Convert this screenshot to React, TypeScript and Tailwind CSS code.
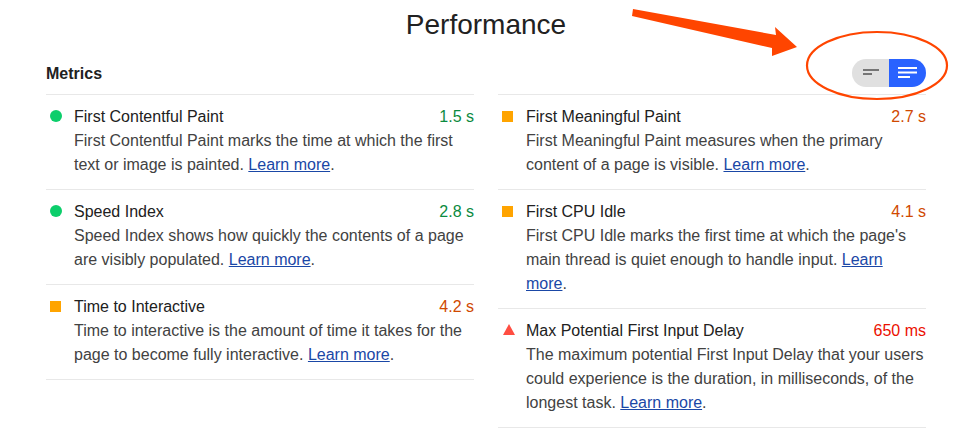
import React from "react";

type Kind = "pass" | "average" | "fail";

interface Metric {
  title: string;
  value: string;
  kind: Kind;
  desc: string;
}

const left: Metric[] = [
  {
    title: "First Contentful Paint",
    value: "1.5 s",
    kind: "pass",
    desc: "First Contentful Paint marks the time at which the first text or image is painted.",
  },
  {
    title: "Speed Index",
    value: "2.8 s",
    kind: "pass",
    desc: "Speed Index shows how quickly the contents of a page are visibly populated.",
  },
  {
    title: "Time to Interactive",
    value: "4.2 s",
    kind: "average",
    desc: "Time to interactive is the amount of time it takes for the page to become fully interactive.",
  },
];

const right: Metric[] = [
  {
    title: "First Meaningful Paint",
    value: "2.7 s",
    kind: "average",
    desc: "First Meaningful Paint measures when the primary content of a page is visible.",
  },
  {
    title: "First CPU Idle",
    value: "4.1 s",
    kind: "average",
    desc: "First CPU Idle marks the first time at which the page's main thread is quiet enough to handle input.",
  },
  {
    title: "Max Potential First Input Delay",
    value: "650 ms",
    kind: "fail",
    desc: "The maximum potential First Input Delay that your users could experience is the duration, in milliseconds, of the longest task.",
  },
];

function Icon({ kind }: { kind: Kind }) {
  if (kind === "pass") {
    return <span className="mt-[5px] ml-[4px] block h-[12px] w-[12px] rounded-full bg-[#0cce6b]" />;
  }
  if (kind === "average") {
    return <span className="mt-[6px] ml-[4px] block h-[11px] w-[11px] bg-[#ffa400]" />;
  }
  return (
    <svg className="mt-[5px] ml-[5px] block" width="12" height="11" viewBox="0 0 12 11">
      <polygon points="6,0 12,11 0,11" fill="#ff4e42" />
    </svg>
  );
}

const valueColor: Record<Kind, string> = {
  pass: "text-[#0b8a40]",
  average: "text-[#d04900]",
  fail: "text-[#eb0f00]",
};

function Row({ m }: { m: Metric }) {
  return (
    <div className="flex border-b border-[#e8e8e8] pt-[10px] pb-[12px]">
      <div className="w-[28px] shrink-0">
        <Icon kind={m.kind} />
      </div>
      <div className="flex-1">
        <div className="flex justify-between">
          <span className="text-[#212121]">{m.title}</span>
          <span className={valueColor[m.kind]}>{m.value}</span>
        </div>
        <div className="w-[398px] text-[#424242]">
          {m.desc}{" "}
          <a href="#" className="text-[#1a47a6] underline">
            Learn more
          </a>
          .
        </div>
      </div>
    </div>
  );
}

function Column({ items }: { items: Metric[] }) {
  return (
    <div className="border-t border-[#e8e8e8]">
      {items.map((m) => (
        <Row key={m.title} m={m} />
      ))}
    </div>
  );
}

export default function App() {
  return (
    <div
      className="relative h-[435px] w-[962px] overflow-hidden bg-white pt-[1px] text-[16px] leading-[24px]"
      style={{ fontFamily: '"Liberation Sans", Arial, sans-serif' }}
    >
      <div className="ml-[46px] w-[880px]">
        <div className="h-[48px] text-center text-[28px] leading-[48px] text-[#212121]">Performance</div>
        <div className="flex h-[45px] items-center justify-between pt-[3px]">
          <span className="pt-[2px] font-bold text-[#212121]">Metrics</span>
          <div className="flex h-[28px] w-[74px] overflow-hidden rounded-full">
            <div className="flex w-[37px] items-center justify-center bg-[#e0e0e0]">
              <svg width="18" height="10" viewBox="0 0 18 10">
                <rect x="1" y="1" width="16" height="2" fill="#757575" />
                <rect x="1" y="5" width="9" height="2" fill="#757575" />
              </svg>
            </div>
            <div className="flex w-[37px] items-center justify-center bg-[#2962ff]">
              <svg width="20" height="12" viewBox="0 0 20 12">
                <rect x="0" y="0" width="19" height="2" fill="#ffffff" />
                <rect x="0" y="4.5" width="19" height="2" fill="#ffffff" />
                <rect x="0" y="9" width="12" height="2" fill="#ffffff" />
              </svg>
            </div>
          </div>
        </div>
        <div className="grid grid-cols-2 gap-x-[24px]">
          <Column items={left} />
          <Column items={right} />
        </div>
      </div>
      <svg
        className="pointer-events-none absolute left-0 top-0"
        width="962"
        height="435"
        viewBox="0 0 962 435"
      >
        <polygon
          points="633,9 776,35 775,27 797,47 772,56 772,48 632,16"
          fill="#ff4500"
        />
        <ellipse cx="877" cy="65.5" rx="70" ry="33.5" fill="none" stroke="#ff4500" strokeWidth="2.2" />
      </svg>
    </div>
  );
}
